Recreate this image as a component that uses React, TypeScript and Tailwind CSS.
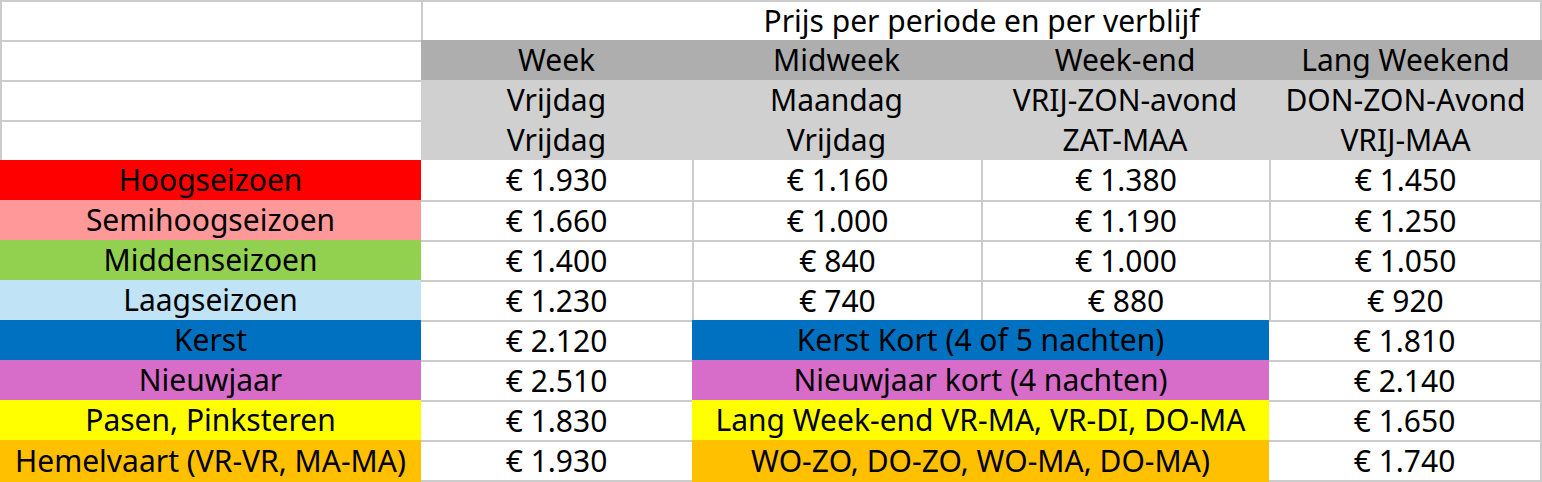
import React from "react";

type PlainRow = {
  label: string;
  bg: string;
  prices: string[];
};

type MergedRow = {
  label: string;
  bg: string;
  week: string;
  merged: string;
  lang: string;
};

const plainRows: PlainRow[] = [
  { label: "Hoogseizoen", bg: "bg-[#ff0000]", prices: ["€ 1.930", "€ 1.160", "€ 1.380", "€ 1.450"] },
  { label: "Semihoogseizoen", bg: "bg-[#ff9999]", prices: ["€ 1.660", "€ 1.000", "€ 1.190", "€ 1.250"] },
  { label: "Middenseizoen", bg: "bg-[#92d050]", prices: ["€ 1.400", "€ 840", "€ 1.000", "€ 1.050"] },
  { label: "Laagseizoen", bg: "bg-[#c0e4f5]", prices: ["€ 1.230", "€ 740", "€ 880", "€ 920"] },
];

const mergedRows: MergedRow[] = [
  { label: "Kerst", bg: "bg-[#0070c0]", week: "€ 2.120", merged: "Kerst Kort (4 of 5 nachten)", lang: "€ 1.810" },
  { label: "Nieuwjaar", bg: "bg-[#d76cc9]", week: "€ 2.510", merged: "Nieuwjaar kort (4 nachten)", lang: "€ 2.140" },
  { label: "Pasen, Pinksteren", bg: "bg-[#ffff00]", week: "€ 1.830", merged: "Lang Week-end VR-MA, VR-DI, DO-MA", lang: "€ 1.650" },
  { label: "Hemelvaart (VR-VR, MA-MA)", bg: "bg-[#ffc000]", week: "€ 1.930", merged: "WO-ZO, DO-ZO, WO-MA, DO-MA)", lang: "€ 1.740" },
];

const cell = "flex items-center justify-center whitespace-nowrap border-[#cccccc]";

export default function App() {
  return (
    <main className="w-[1542px] h-[482px] bg-white text-black font-['Noto_Sans',sans-serif] text-[30px] leading-[40px]">
      <div className="grid grid-cols-[421px_271px_289px_288px_273px] auto-rows-[40px]">
        {/* kop */}
        <div className={`${cell} border-t-2 border-l-2`} />
        <div className={`${cell} col-span-4 border-t-2 border-l-2 border-r-2`}>
          Prijs per periode en per verblijf
        </div>

        <div className={`${cell} border-t-2 border-l-2`} />
        <div className={`${cell} bg-[#aeaeae]`}>Week</div>
        <div className={`${cell} bg-[#aeaeae]`}>Midweek</div>
        <div className={`${cell} bg-[#aeaeae]`}>Week-end</div>
        <div className={`${cell} bg-[#aeaeae]`}>Lang Weekend</div>

        <div className={`${cell} border-t-2 border-l-2`} />
        <div className={`${cell} bg-[#d0d0d0]`}>Vrijdag</div>
        <div className={`${cell} bg-[#d0d0d0]`}>Maandag</div>
        <div className={`${cell} bg-[#d0d0d0]`}>VRIJ-ZON-avond</div>
        <div className={`${cell} bg-[#d0d0d0]`}>DON-ZON-Avond</div>

        <div className={`${cell} border-t-2 border-l-2`} />
        <div className={`${cell} bg-[#d0d0d0]`}>Vrijdag</div>
        <div className={`${cell} bg-[#d0d0d0]`}>Vrijdag</div>
        <div className={`${cell} bg-[#d0d0d0]`}>ZAT-MAA</div>
        <div className={`${cell} bg-[#d0d0d0]`}>VRIJ-MAA</div>

        {/* seizoenen */}
        {plainRows.map((row, i) => {
          const top = i === 0 ? "" : "border-t-2";
          return (
            <React.Fragment key={row.label}>
              <div className={`${cell} ${row.bg}`}>{row.label}</div>
              <div className={`${cell} ${top}`}>{row.prices[0]}</div>
              <div className={`${cell} ${top} border-l-2`}>{row.prices[1]}</div>
              <div className={`${cell} ${top} border-l-2`}>{row.prices[2]}</div>
              <div className={`${cell} ${top} border-l-2 border-r-2`}>{row.prices[3]}</div>
            </React.Fragment>
          );
        })}

        {/* feestdagen */}
        {mergedRows.map((row, i) => {
          const last = i === mergedRows.length - 1;
          const h = last ? "h-[42px] border-b-2" : "";
          return (
            <React.Fragment key={row.label}>
              <div className={`${cell} ${row.bg} ${last ? "h-[42px]" : ""}`}>{row.label}</div>
              <div className={`${cell} border-t-2 ${h}`}>{row.week}</div>
              <div className={`${cell} col-span-2 ${row.bg} ${last ? "h-[42px]" : ""}`}>{row.merged}</div>
              <div className={`${cell} border-t-2 border-r-2 ${h}`}>{row.lang}</div>
            </React.Fragment>
          );
        })}
      </div>
    </main>
  );
}
